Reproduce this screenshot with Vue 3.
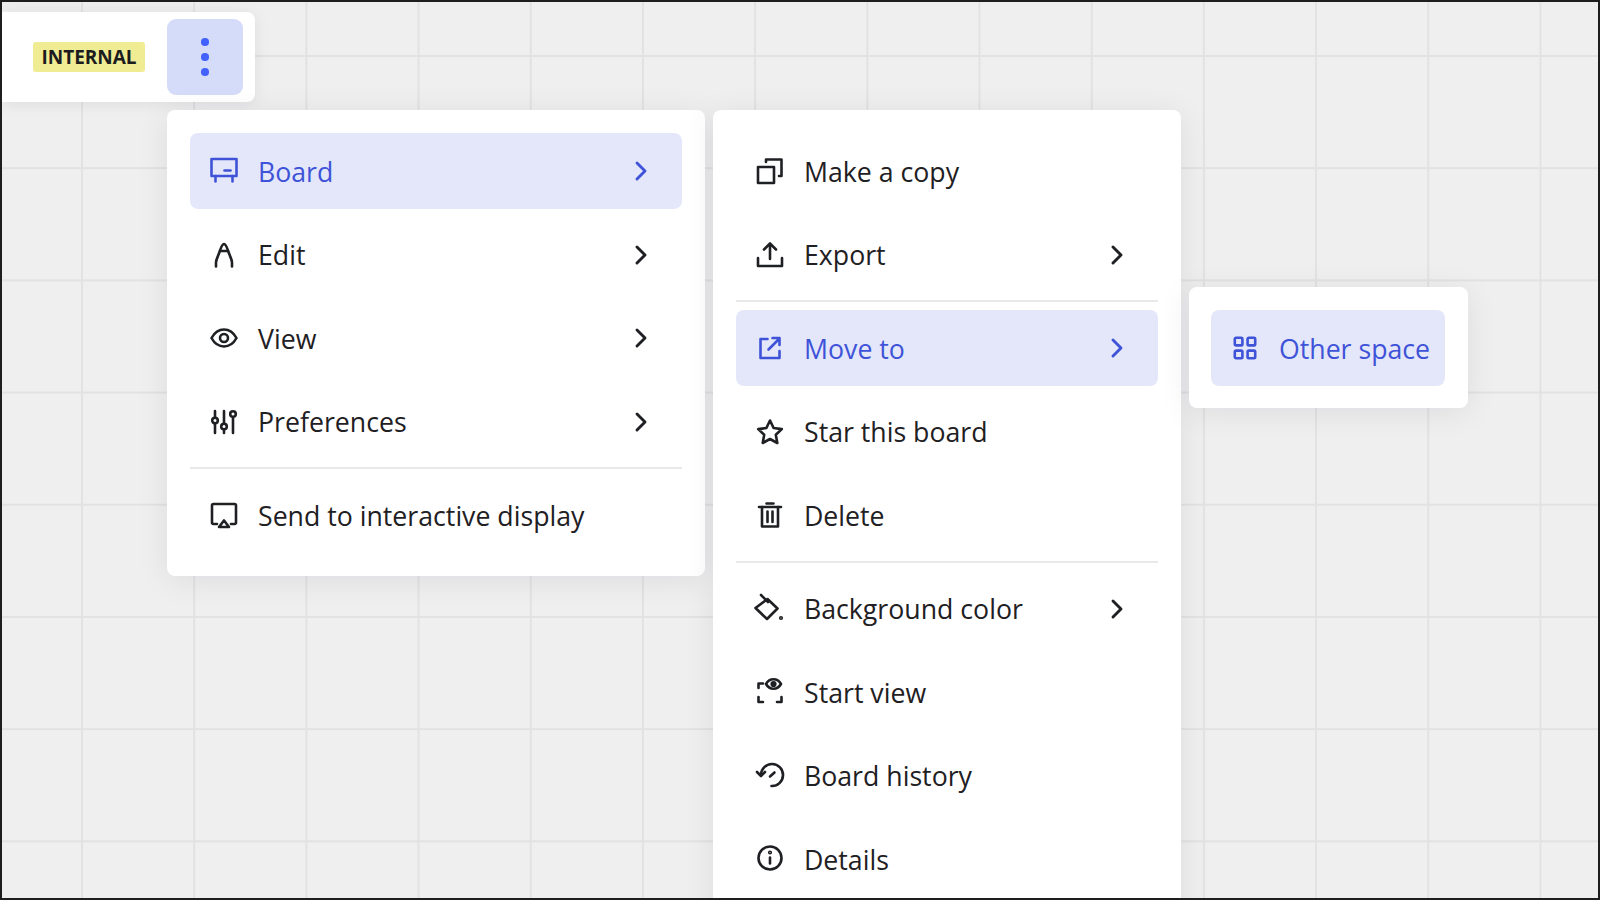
<script setup>
const first = [
  { label: 'Board', icon: 'board', arrow: true, active: true },
  { label: 'Edit', icon: 'edit', arrow: true },
  { label: 'View', icon: 'eye', arrow: true },
  { label: 'Preferences', icon: 'sliders', arrow: true },
  { divider: true },
  { label: 'Send to interactive display', icon: 'cast' },
]
const second = [
  { label: 'Make a copy', icon: 'copy' },
  { label: 'Export', icon: 'export', arrow: true },
  { divider: true },
  { label: 'Move to', icon: 'move', arrow: true, active: true },
  { label: 'Star this board', icon: 'star' },
  { label: 'Delete', icon: 'trash' },
  { divider: true },
  { label: 'Background color', icon: 'bucket', arrow: true },
  { label: 'Start view', icon: 'startview' },
  { label: 'Board history', icon: 'history' },
  { label: 'Details', icon: 'info' },
]
const third = [{ label: 'Other space', icon: 'grid', active: true }]
const menus = [
  { key: 'first', items: first },
  { key: 'second', items: second },
  { key: 'third', items: third },
]
</script>

<template>
  <div class="frame">
    <div class="canvas">
      <div class="toolbar">
        <span class="tag">INTERNAL</span>
        <button class="more"><i></i><i></i><i></i></button>
      </div>
      <div class="menus">
        <div v-for="menu in menus" :key="menu.key" class="menu" :class="menu.key">
          <template v-for="(item, n) in menu.items" :key="n">
            <div v-if="item.divider" class="divider"></div>
            <div v-else class="item" :class="{ active: item.active }">
              <svg class="icon" viewBox="0 0 28 28" fill="none" stroke="currentColor" stroke-width="2.6" stroke-linecap="round" stroke-linejoin="round">
                <template v-if="item.icon === 'board'">
                  <path d="M1.500 2h25v17h-25z" />
                  <path d="M5.500 19v5.500M22.500 19v5.500" />
                  <path d="M14.500 13.500h6" />
                </template>
                <template v-else-if="item.icon === 'edit'">
                  <path d="M6 25.500v-4c0-3 2-6 3.500-10.500 1-3 2.500-8 4.500-8s3.500 5 4.500 8c1.500 4.500 3.500 7.500 3.500 10.500v4" />
                  <path d="M10 10h8" />
                </template>
                <template v-else-if="item.icon === 'eye'">
                  <path d="M1.500 14c3-5.500 7.500-8.500 12.500-8.500s9.500 3 12.500 8.500c-3 5.500-7.500 8.500-12.500 8.500s-9.500-3-12.500-8.500z" />
                  <circle cx="14" cy="14" r="4" />
                </template>
                <template v-else-if="item.icon === 'sliders'">
                  <path d="M5 3v6M5 16v9M14 3v12M14 22v3M23 10v15" />
                  <circle cx="5" cy="12.500" r="2.800" />
                  <circle cx="14" cy="18.500" r="2.800" />
                  <circle cx="23" cy="6" r="2.800" />
                </template>
                <template v-else-if="item.icon === 'cast'">
                  <path d="M7 23H3.500a1.500 1.500 0 0 1-1.500-1.500v-17A1.500 1.500 0 0 1 3.500 3h21A1.500 1.500 0 0 1 26 4.500v17a1.500 1.500 0 0 1-1.500 1.500H21" />
                  <path d="M14 19.500l5 6.500H9z" />
                </template>
                <template v-else-if="item.icon === 'copy'">
                  <rect x="2" y="10" width="16" height="16" />
                  <path d="M10 5V2.500h15.500v16.500H23" />
                </template>
                <template v-else-if="item.icon === 'export'">
                  <path d="M14 18V3M8 8.500L14 2.500l6 6" />
                  <path d="M2 17v8h24v-8" />
                </template>
                <template v-else-if="item.icon === 'move'">
                  <path d="M11.500 5H4.500v19h19v-7" />
                  <path d="M12.500 15.500L23 5M16.500 4H23.500V11" />
                </template>
                <template v-else-if="item.icon === 'star'">
                  <path d="M14 2.500l3.600 7.500 8.200 1.100-6 5.700 1.500 8.200-7.300-4-7.300 4 1.500-8.200-6-5.700 8.200-1.100z" />
                </template>
                <template v-else-if="item.icon === 'trash'">
                  <path d="M3 6h22M10.500 2.500h7" />
                  <path d="M6 6v19.500h16V6" />
                  <path d="M11.500 10.500v10.500M16.500 10.500v10.500" />
                </template>
                <template v-else-if="item.icon === 'bucket'">
                  <path d="M11.500 4l10 9.500-10.500 10.500L-0.500 13z" />
                  <path d="M5 0l7 7" />
                  <circle cx="25" cy="23" r=".8" />
                </template>
                <template v-else-if="item.icon === 'startview'">
                  <path d="M7 5.500H2.500V10M2.500 19v5H7M21 24h4.500v-5" />
                  <path d="M10 6c1.800-3.200 4.300-4.800 7.500-4.800S23.200 2.800 25 6c-1.800 3.200-4.300 4.800-7.500 4.800S11.800 9.200 10 6z" />
                  <circle cx="17.500" cy="6" r="1.800" fill="currentColor" />
                </template>
                <template v-else-if="item.icon === 'history'">
                  <path d="M5 13A11 11 0 1 1 15.500 24" />
                  <path d="M1 10l4 4 4-4" />
                  <path d="M14 14.500l4.500-4" />
                </template>
                <template v-else-if="item.icon === 'info'">
                  <circle cx="14" cy="13" r="11.500" />
                  <path d="M14 12.500v6" />
                  <circle cx="14" cy="7.500" r=".8" />
                </template>
                <template v-else-if="item.icon === 'grid'">
                  <rect x="3.800" y="3.800" width="7.600" height="7.600" rx="1.200" />
                  <rect x="16.600" y="3.800" width="7.600" height="7.600" rx="1.200" />
                  <rect x="3.800" y="16.600" width="7.600" height="7.600" rx="1.200" />
                  <rect x="16.600" y="16.600" width="7.600" height="7.600" rx="1.200" />
                </template>
              </svg>
              <span class="label">{{ item.label }}</span>
              <svg v-if="item.arrow" class="chevron" viewBox="0 0 28 28" fill="none" stroke="currentColor" stroke-width="2.900" stroke-linecap="round" stroke-linejoin="round">
                <path d="M10 6l8 8-8 8" />
              </svg>
            </div>
          </template>
        </div>
      </div>
    </div>
  </div>
</template>

<style>
html, body { margin: 0; background: #1f1f1f; }
</style>

<style scoped>
.frame {
  width: 1600px;
  height: 900px;
  box-sizing: border-box;
  border: 2px solid #1e1e1e;
  overflow: hidden;
  font-family: "Open Sans", "Noto Sans", sans-serif;
}
.canvas {
  height: 100%;
  padding-top: 10px;
  background-color: #efefef;
  background-image:
    linear-gradient(to right, #e2e2e2 2px, transparent 2px),
    linear-gradient(to bottom, #e2e2e2 2px, transparent 2px);
  background-size: 112.200px 112.200px;
  background-position: 79px 53px;
}
.toolbar {
  width: 253px;
  height: 90px;
  box-sizing: border-box;
  padding-left: 31px;
  padding-right: 12px;
  display: flex;
  align-items: center;
  justify-content: space-between;
  background: #fff;
  border-radius: 0 8px 8px 0;
  box-shadow: 0 2px 16px rgba(5, 0, 56, 0.08);
}
.tag {
  height: 30px;
  width: 112px;
  border-radius: 3px;
  background: #efec94;
  color: #1c1c1e;
  font-size: 19px;
  font-weight: 700;
  line-height: 30px;
  text-align: center;
}
.more {
  width: 76px;
  height: 76px;
  padding: 0;
  border: 0;
  border-radius: 9px;
  background: #d5dcfa;
  display: flex;
  flex-direction: column;
  align-items: center;
  justify-content: center;
  gap: 7.600px;
}
.more i {
  width: 7.500px;
  height: 7.500px;
  border-radius: 50%;
  background: #4262ff;
}
.menus {
  display: flex;
  align-items: flex-start;
  gap: 8px;
  margin-top: 8px;
  margin-left: 165px;
}
.menu {
  flex: none;
  box-sizing: border-box;
  padding: 23px;
  background: #fff;
  border-radius: 8px;
  box-shadow: 0 4px 32px rgba(5, 0, 56, 0.08);
}
.first { width: 538px; height: 466px; }
.second { width: 468px; height: 830px; }
.third { width: 279px; height: 121px; margin-top: 177px; padding: 23px 23px 22px 22px; }
.item {
  height: 76px;
  margin-bottom: 7.500px;
  padding: 0 20px;
  display: flex;
  align-items: center;
  border-radius: 8px;
  color: #1f2023;
}
.item.active {
  background: #e4e7fa;
  color: #3e53d8;
}
.third .item { padding-right: 15px; margin: 0; }
.icon {
  width: 28px;
  height: 28px;
  flex: none;
  margin-right: 20px;
  overflow: visible;
}
.label {
  flex: 1;
  font-size: 26.700px;
  white-space: nowrap;
}
.chevron {
  width: 28px;
  height: 28px;
  flex: none;
  margin-right: 7px;
}
.divider {
  height: 2px;
  background: #e9e9ec;
  margin: 0 0 8px;
}
</style>
